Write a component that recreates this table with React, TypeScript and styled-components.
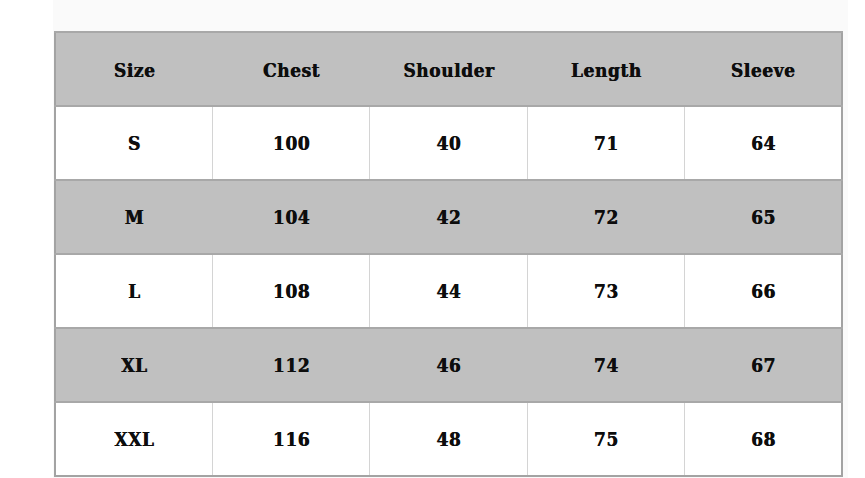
import styled, { createGlobalStyle } from 'styled-components';

const GlobalStyle = createGlobalStyle`
  html, body {
    margin: 0;
    padding: 0;
    background: #ffffff;
  }
`;

const headers = ['Size', 'Chest', 'Shoulder', 'Length', 'Sleeve'];

const rows = [
  ['S', '100', '40', '71', '64'],
  ['M', '104', '42', '72', '65'],
  ['L', '108', '44', '73', '66'],
  ['XL', '112', '46', '74', '67'],
  ['XXL', '116', '48', '75', '68'],
];

const App = () => {
  return (
    <Page>
      <GlobalStyle />
      <Sheet>
        <Table>
          <thead>
            <Row shaded>
              {headers.map((h) => (
                <HeadCell key={h}>
                  <Label>{h}</Label>
                </HeadCell>
              ))}
            </Row>
          </thead>
          <tbody>
            {rows.map((row, i) => (
              <Row key={row[0]} shaded={i % 2 === 1}>
                {row.map((cell, j) => (
                  <Cell key={j} shaded={i % 2 === 1}>
                    <Label>{cell}</Label>
                  </Cell>
                ))}
              </Row>
            ))}
          </tbody>
        </Table>
      </Sheet>
    </Page>
  );
};

export default App;

const Page = styled.div`
  width: 865px;
  height: 478px;
  padding-left: 53px;
  box-sizing: border-box;
  background: #ffffff;
  overflow: hidden;
`;

const Sheet = styled.div`
  width: 795px;
  height: 478px;
  padding: 31px 0 0 1px;
  box-sizing: border-box;
  background: #fafafa;
`;

const Table = styled.table`
  width: 789px;
  border-collapse: collapse;
  table-layout: fixed;
  border: 2px solid #a3a3a3;
  font-family: 'DejaVu Serif', 'Liberation Serif', serif;
  font-weight: bold;
  font-size: 17px;
  color: #0d0d0d;
`;

const Row = styled.tr.withConfig({ shouldForwardProp: (p) => p !== 'shaded' })<{ shaded?: boolean }>`
  height: 74px;
  background: ${(p) => (p.shaded ? '#c0c0c0' : '#ffffff')};
  border-top: 2px solid #a8a8a8;
`;

const HeadCell = styled.th`
  text-align: center;
  vertical-align: middle;
  padding: 3px 0 0;
  font-weight: bold;
`;

const Cell = styled.td.withConfig({ shouldForwardProp: (p) => p !== 'shaded' })<{ shaded?: boolean }>`
  text-align: center;
  vertical-align: middle;
  padding: 2px 0 0;
  border-left: 1px solid ${(p) => (p.shaded ? '#c0c0c0' : '#d4d4d4')};
`;

const Label = styled.span`
  display: inline-block;
  letter-spacing: 0.6px;
  margin-right: -0.6px;
  transform: scaleY(1.08);
  text-shadow: 0.6px 0 0 #0d0d0d;
`;
